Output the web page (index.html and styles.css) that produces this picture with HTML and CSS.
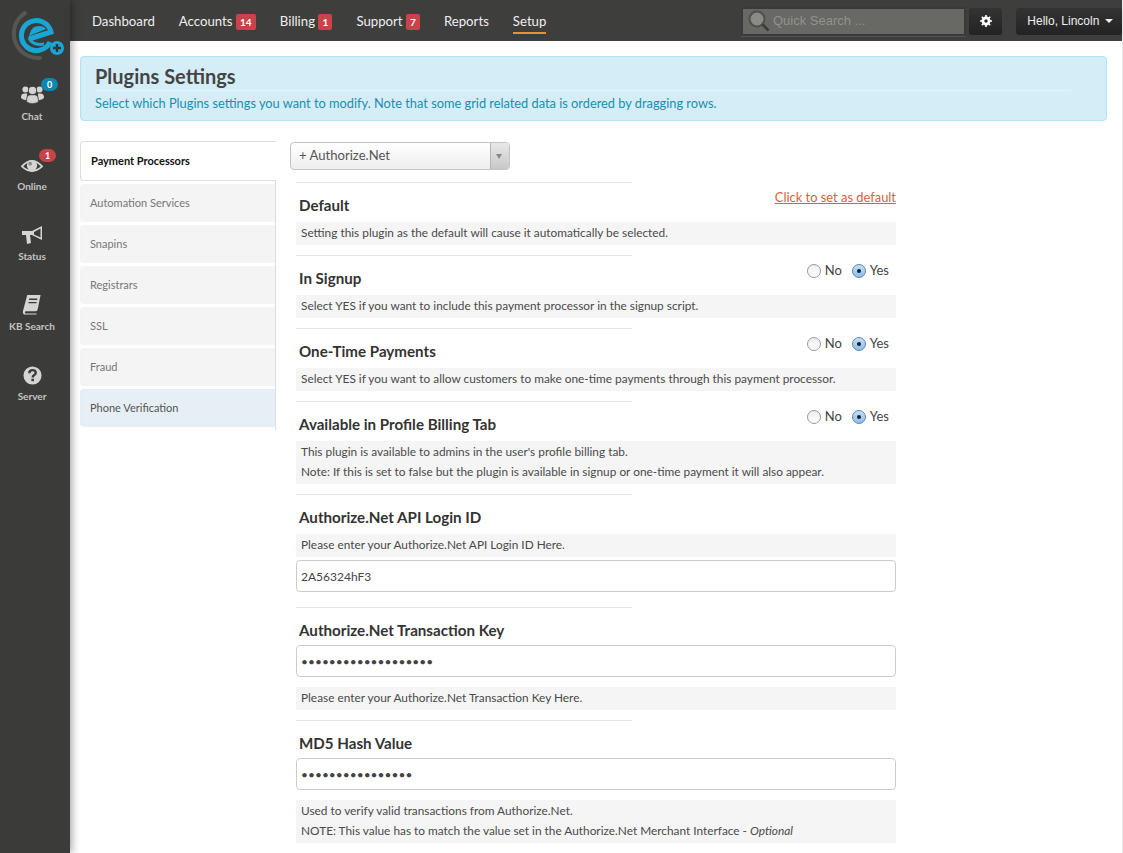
FILE: index.html
```html
<!DOCTYPE html>
<html lang="en">
    <head>
        <meta charset="UTF-8" />
        <title>Plugins Settings</title>
        <link rel="stylesheet" href="styles.css">
    </head>
    <body>
        <aside class="sidebar">
            <svg class="logo" width="70" height="70" viewBox="0 0 70 70">
                <path d="M25 13 A24.5 24.5 0 0 0 40 58" fill="none" stroke="#575655" stroke-width="4" stroke-linecap="round" />
                <path d="M50 42 A15 15 0 1 1 51 32 L29 39" fill="none" stroke="#1ba5d4" stroke-width="5" />
                <path d="M30 33 Q32 26 39 26 Q44 26 46 29 L29 36Z" fill="#1ba5d4" />
                <path d="M29 38 Q33 46 44 44" fill="none" stroke="#1ba5d4" stroke-width="3" />
                <circle cx="57" cy="48" r="7" fill="#1ba5d4" />
                <path d="M53 48 H61 M57 44 V52" stroke="#333" stroke-width="2.4" />
            </svg>

            <a class="side-item">
                <span class="side-badge badge-blue">0</span>
                <svg width="23" height="22" viewBox="0 0 26 24" fill="#d5d5d3">
                    <circle cx="5" cy="7" r="3.4" />
                    <circle cx="21" cy="7" r="3.4" />
                    <path d="M0 16 Q0 11.5 4 11.5 L7 11.5 L6 19 Q1 18.5 0 16Z" />
                    <path d="M26 16 Q26 11.5 22 11.5 L19 11.5 L20 19 Q25 18.5 26 16Z" />
                    <circle cx="13" cy="8" r="4.6" stroke="#3b3b3a" />
                    <path d="M6.5 21 Q6 13.5 10 13 L16 13 Q20 13.5 19.5 21 Q13 24.5 6.5 21Z" stroke="#3b3b3a" stroke-width=".6" />
                </svg>
                <span>Chat</span>
            </a>
            <a class="side-item side-online">
                <span class="side-badge badge-red">1</span>
                <svg width="22" height="15" viewBox="0 0 24 16">
                    <path d="M1 9 Q12 -3 23 9 Q12 19 1 9Z" fill="none" stroke="#d5d5d3" stroke-width="2" />
                    <circle cx="12" cy="8" r="5.6" fill="#d5d5d3" />
                    <circle cx="10" cy="6" r="2" fill="#8a8a88" />
                </svg>
                <span>Online</span>
            </a>
            <a class="side-item">
                <svg width="23" height="20" viewBox="0 0 23 20">
                    <path d="M1 6 L11 6 L21 1 L21 15 L11 10 L9 10 L10 18 L6 19 L5 10 L1 10Z" fill="#d5d5d3" />
                    <path d="M13 7 L19.5 3.5 L19.5 12.5 L13 9.5Z" fill="#3b3b3a" />
                </svg>
                <span>Status</span>
            </a>
            <a class="side-item">
                <svg width="20" height="21" viewBox="0 0 20 22">
                    <path d="M5 1 L19 1 L16 16 Q15.5 18 14 18 L4 18 Q2.5 18 2.5 19.5 Q2.5 20.5 4 20.5 L15 20.5 L14.5 21.5 L3 21.5 Q0 21.5 .5 18Z" fill="#d5d5d3" />
                    <path d="M7 5.5 H15.5 M6.3 9 H14.8" stroke="#3b3b3a" stroke-width="1.5" />
                </svg>
                <span>KB Search</span>
            </a>
            <a class="side-item">
                <svg width="19" height="19" viewBox="0 0 20 20">
                    <circle cx="10" cy="10" r="9.5" fill="#d5d5d3" />
                    <path d="M6.6 7.6 Q6.8 4.4 10 4.4 Q13.4 4.4 13.4 7.2 Q13.4 8.8 11.6 9.8 Q10.2 10.6 10.2 12" fill="none" stroke="#3b3b3a" stroke-width="2.5" />
                    <rect x="8.8" y="13.4" width="2.8" height="2.6" fill="#3b3b3a" />
                </svg>
                <span>Server</span>
            </a>
        </aside>

        <div class="page">
            <header class="topbar">
                <nav class="main-nav">
                    <a>Dashboard</a>
                    <a>Accounts <b class="count wide">14</b></a>
                    <a>Billing <b class="count">1</b></a>
                    <a>Support <b class="count">7</b></a>
                    <a>Reports</a>
                    <a class="current">Setup</a>
                </nav>
                <div class="quick-search">
                    <svg width="24" height="24" viewBox="0 0 24 24">
                        <circle cx="10" cy="10" r="7.5" fill="#8b8b86" stroke="#4f4f4c" stroke-width="2" />
                        <path d="M15.5 15.5 L21.5 21.5" stroke="#3a3a38" stroke-width="2.6" />
                    </svg>
                    <span>Quick Search ...</span>
                </div>
                <button class="gear-btn">
                    <svg width="12" height="12" viewBox="0 0 12 12">
                        <circle cx="6" cy="6" r="3.2" fill="none" stroke="#fff" stroke-width="2.6" />
                        <path d="M6 0 V12 M0 6 H12 M1.8 1.8 L10.2 10.2 M10.2 1.8 L1.8 10.2" stroke="#fff" stroke-width="1.6" />
                        <circle cx="6" cy="6" r="1.7" fill="#2a2a2a" />
                    </svg>
                </button>
                <button class="hello-btn">Hello, Lincoln <i class="caret"></i></button>
            </header>

            <main class="content">
                <div class="title-box">
                    <h1>Plugins Settings</h1>
                    <p>Select which Plugins settings you want to modify. Note that some grid related data is ordered by dragging rows.</p>
                </div>

                <div class="columns">
                    <ul class="tabs">
                        <li class="active">Payment Processors</li>
                        <li>Automation Services</li>
                        <li>Snapins</li>
                        <li>Registrars</li>
                        <li>SSL</li>
                        <li>Fraud</li>
                        <li class="hover">Phone Verification</li>
                    </ul>

                    <div class="tab-body">
                        <div class="select-box">
                            <span class="select-value">+ Authorize.Net</span>
                            <span class="select-arrow"></span>
                        </div>

                        <section class="field">
                            <div class="field-head">
                                <h3>Default</h3>
                                <a class="set-default">Click to set as default</a>
                            </div>
                            <div class="help">Setting this plugin as the default will cause it automatically be selected.</div>
                        </section>

                        <section class="field">
                            <div class="field-head">
                                <h3>In Signup</h3>
                                <div class="radios"><i class="radio"></i>No<i class="radio on"></i>Yes</div>
                            </div>
                            <div class="help">Select YES if you want to include this payment processor in the signup script.</div>
                        </section>

                        <section class="field">
                            <div class="field-head">
                                <h3>One-Time Payments</h3>
                                <div class="radios"><i class="radio"></i>No<i class="radio on"></i>Yes</div>
                            </div>
                            <div class="help">Select YES if you want to allow customers to make one-time payments through this payment processor.</div>
                        </section>

                        <section class="field">
                            <div class="field-head">
                                <h3>Available in Profile Billing Tab</h3>
                                <div class="radios"><i class="radio"></i>No<i class="radio on"></i>Yes</div>
                            </div>
                            <div class="help">This plugin is available to admins in the user's profile billing tab.<br>Note: If this is set to false but the plugin is available in signup or one-time payment it will also appear.</div>
                        </section>

                        <section class="field">
                            <div class="field-head">
                                <h3>Authorize.Net API Login ID</h3>
                            </div>
                            <div class="help">Please enter your Authorize.Net API Login ID Here.</div>
                            <input class="text-input after-help" type="text" value="2A56324hF3" />
                        </section>

                        <section class="field">
                            <div class="field-head short">
                                <h3>Authorize.Net Transaction Key</h3>
                            </div>
                            <input class="text-input" type="password" value="aaaaaaaaaaaaaaaaaaa" />
                            <div class="help after-input">Please enter your Authorize.Net Transaction Key Here.</div>
                        </section>

                        <section class="field">
                            <div class="field-head short">
                                <h3>MD5 Hash Value</h3>
                            </div>
                            <input class="text-input" type="password" value="aaaaaaaaaaaaaaaa" />
                            <div class="help after-input">Used to verify valid transactions from Authorize.Net.<br>NOTE: This value has to match the value set in the Authorize.Net Merchant Interface - <em>Optional</em></div>
                        </section>
                    </div>
                </div>
            </main>
        </div>
    </body>
</html>
```
FILE: styles.css
```css
* {
    box-sizing: border-box;
}

html,
body {
    height: 853px;
    overflow: hidden;
}

body {
    margin: 0;
    display: flex;
    font-family: Lato, "Liberation Sans", sans-serif;
    color: #444;
    background-color: #fff;
}

/* left column */
.sidebar {
    position: relative;
    width: 70px;
    flex-shrink: 0;
    padding: 78px 6px 0 0;
    background-color: #3b3b3a;
    box-shadow: 2px 0 8px rgba(0, 0, 0, 0.35);
    z-index: 2;
}

.logo {
    position: absolute;
    top: 0;
    left: 0;
}

.side-item {
    position: relative;
    display: flex;
    flex-direction: column;
    align-items: center;
    justify-content: flex-end;
    height: 70px;
    padding-bottom: 26px;
    font-size: 10px;
    font-weight: 700;
    color: #c4c4c2;
}

.side-item span:last-child {
    margin-top: 5px;
    line-height: 12px;
}

.side-item svg {
    flex-shrink: 0;
}

.side-online svg {
    margin-bottom: 2px;
}

.side-badge {
    position: absolute;
    top: 0;
    left: 41px;
    min-width: 17px;
    height: 13px;
    border-radius: 7px;
    font-size: 9px;
    line-height: 13px;
    text-align: center;
    color: #fff;
}

.side-online .side-badge {
    top: 1px;
    left: 39px;
}

.badge-blue {
    background-color: #0d87b1;
}

.badge-red {
    background-color: #c8444a;
}

/* top bar */
.page {
    flex: 1;
    min-width: 0;
    border-right: 1px solid #e8e8e8;
}

.topbar {
    display: flex;
    align-items: center;
    height: 41px;
    padding-left: 22px;
    background-color: #3e3e3d;
    color: #eee;
}

.main-nav {
    display: flex;
    flex: 1;
    gap: 24px;
    font-size: 13.2px;
}

.main-nav a {
    padding: 5px 0 2px;
    line-height: 18px;
    border-bottom: 2px solid transparent;
}

.main-nav .current {
    border-bottom-color: #ee8f2b;
}

.count {
    display: inline-block;
    width: 14px;
    height: 16px;
    border-radius: 2px;
    background-color: #c8444a;
    color: #fff;
    font-size: 10px;
    line-height: 17px;
    text-align: center;
}

.count.wide {
    width: 20px;
}

.quick-search {
    display: flex;
    align-items: center;
    width: 225px;
    height: 29px;
    margin-top: 1px;
    padding: 0 0 1px 4px;
    background-color: #686865;
    border: 2px solid #3a3a38;
    box-shadow: 0 1px 0 #555;
    color: #92928e;
    font-family: "Liberation Sans", sans-serif;
    font-size: 13px;
}

.quick-search svg {
    margin-top: 1px;
}

.quick-search span {
    margin-left: 2px;
}

.gear-btn,
.hello-btn {
    height: 27px;
    margin-top: 1px;
    border: 0;
    border-radius: 3px;
    background: linear-gradient(#333, #232323);
    color: #eee;
    font-family: "Liberation Sans", sans-serif;
    font-size: 12px;
}

.gear-btn {
    width: 33px;
    margin-left: 3px;
    padding: 2px 0 0;
}

.hello-btn {
    width: 106px;
    margin-left: 14px;
    padding: 0 0 0 2px;
}

.caret {
    display: inline-block;
    margin-left: 2px;
    border-top: 4px solid #eee;
    border-left: 4px solid transparent;
    border-right: 4px solid transparent;
    vertical-align: 2px;
}

/* content */
.content {
    padding: 15px 15px 0 10px;
}

.title-box {
    height: 65px;
    padding: 7px 14px 0;
    background-color: #d4edf7;
    border: 1px solid #b0e6f2;
    border-radius: 4px;
}

.title-box h1 {
    margin: 0 21px 0 0;
    padding-bottom: 2px;
    border-bottom: 1px solid #e2f3f9;
    font-size: 20px;
    line-height: 24px;
    color: #444;
}

.title-box p {
    margin: 4px 0 0;
    font-size: 12.8px;
    line-height: 17px;
    color: #1a8fb0;
}

.columns {
    display: flex;
    margin-top: 20px;
}

.tabs {
    width: 196px;
    margin: 0;
    padding: 0;
    height: 289px;
    list-style: none;
    border-right: 1px solid #ddd;
    font-size: 11px;
    color: #777;
}

.tabs li {
    display: flex;
    align-items: center;
    width: 195px;
    height: 38px;
    margin-bottom: 3px;
    padding: 0 0 2px 10px;
    background-color: #f4f4f4;
    border-radius: 4px 0 0 4px;
}

.tabs .active {
    position: relative;
    width: 196px;
    height: 40px;
    margin-bottom: 3px;
    padding-left: 10px;
    background-color: #fff;
    border: 1px solid #ddd;
    border-right: 0;
    color: #111;
    font-weight: 700;
}

.tabs .hover {
    background-color: #e6eff5;
    color: #555;
}

.tab-body {
    width: 620px;
    margin-left: 14px;
}

.select-box {
    display: flex;
    width: 220px;
    height: 28px;
    margin-top: 1px;
    background: linear-gradient(#fff, #eee);
    border: 1px solid #c4c4c4;
    border-radius: 4px;
    font-size: 13.1px;
    line-height: 24px;
    color: #555;
}

.select-value {
    flex: 1;
    padding-left: 8px;
}

.select-arrow {
    position: relative;
    width: 19px;
    background: linear-gradient(#e8e8e8, #c8c8c8);
    border-left: 1px solid #b5b5b5;
    border-radius: 0 3px 3px 0;
}

.select-arrow::after {
    content: "";
    position: absolute;
    top: 11px;
    left: 5px;
    border-top: 5px solid #888;
    border-left: 3px solid transparent;
    border-right: 3px solid transparent;
}

.field {
    position: relative;
    width: 600px;
    margin-left: 6px;
    padding-top: 1px;
    padding-bottom: 10px;
}

.select-box + .field {
    margin-top: 12px;
}

.field::before {
    content: "";
    position: absolute;
    top: 0;
    left: 0;
    width: 336px;
    height: 1px;
    background-color: #e6e6e6;
}

.field-head {
    display: flex;
    justify-content: space-between;
    height: 39px;
    padding: 13px 0 0 3px;
}

.field-head.short {
    height: 24px;
    margin-bottom: 13px;
}

.field-head h3 {
    margin: 0;
    font-size: 15.15px;
    line-height: 18px;
    color: #333;
}

.set-default {
    height: 16px;
    margin-top: -7px;
    font-size: 12.9px;
    line-height: 16px;
    color: #d65f44;
    text-decoration: underline;
}

.radios {
    display: flex;
    align-items: center;
    height: 16px;
    margin-top: -7px;
    padding-right: 7px;
    font-size: 13px;
    color: #444;
}

.radio {
    width: 14px;
    height: 14px;
    margin-right: 4px;
    margin-top: 2px;
    border: 1px solid #999;
    border-radius: 50%;
    background: linear-gradient(#eee, #fff);
}

.radio.on {
    position: relative;
    margin-left: 10px;
    border-color: #5d86ad;
    background: linear-gradient(#c6def5, #8fbdea);
}

.radio.on::after {
    content: "";
    position: absolute;
    top: 4px;
    left: 4px;
    width: 4px;
    height: 4px;
    border-radius: 50%;
    background-color: #123;
}

.help {
    padding: 1px 5px 2px;
    background-color: #f5f5f5;
    font-size: 11.85px;
    line-height: 20px;
    color: #4a4a4a;
}

.after-input {
    margin-top: 10px;
}

.after-help {
    margin-top: 3px;
    margin-bottom: 5px;
}

.text-input {
    display: block;
    width: 100%;
    height: 32px;
    padding: 0 4px;
    background-color: #fff;
    border: 1px solid #ccc;
    border-radius: 4px;
    font-family: Lato, sans-serif;
    font-size: 12px;
    color: #444;
}
```
